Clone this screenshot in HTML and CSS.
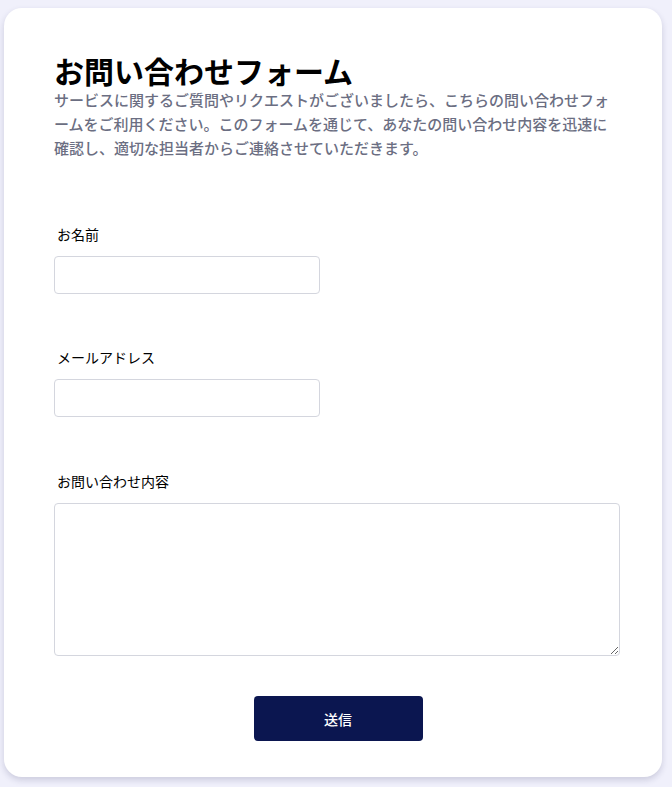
FILE: index.html
```html
<!DOCTYPE html>
<html lang="ja">
<head>
<meta charset="utf-8">
<link rel="stylesheet" href="styles.css">
</head>
<body>
<main class="card">
  <h1 class="title">お問い合わせフォーム</h1>
  <p class="desc">サービスに関するご質問やリクエストがございましたら、こちらの問い合わせフォームをご利用ください。このフォームを通じて、あなたの問い合わせ内容を迅速に確認し、適切な担当者からご連絡させていただきます。</p>
  <form class="form">
    <div class="field">
      <label class="label" for="name">お名前</label>
      <input class="input" id="name" type="text">
    </div>
    <div class="field field-mid">
      <label class="label" for="email">メールアドレス</label>
      <input class="input" id="email" type="email">
    </div>
    <div class="field field-last">
      <label class="label" for="msg">お問い合わせ内容</label>
      <textarea class="textarea" id="msg"></textarea>
    </div>
    <div class="actions">
      <button class="button" type="button">送信</button>
    </div>
  </form>
</main>
</body>
</html>
```
FILE: styles.css
```css
html, body {
  margin: 0;
  padding: 0;
}
body {
  background: #f0f0fb;
  font-family: "Noto Sans CJK JP", "Noto Sans", sans-serif;
  padding: 8px 10px 10px 4px;
}
.card {
  background: #ffffff;
  border-radius: 18px;
  box-shadow: 0 3px 6px rgba(40, 40, 90, 0.18);
  padding: 44px 42px 36px 50px;
  height: 689px;
}
.title {
  margin: 0;
  font-size: 30px;
  font-weight: 700;
  line-height: 36px;
  color: #000;
}
.desc {
  margin: 0;
  font-size: 15px;
  line-height: 24px;
  font-weight: 500;
  color: #6b6e82;
}
.form {
  margin-top: 63px;
  display: flex;
  flex-direction: column;
}
.field {
  display: flex;
  flex-direction: column;
  margin-bottom: 52px;
}
.field-mid {
  margin-bottom: 53px;
}
.field-last {
  margin-bottom: 40px;
}
.label {
  font-size: 14px;
  font-weight: 400;
  color: #000;
  line-height: 22px;
  padding-left: 3px;
  margin-bottom: 11px;
}
.input {
  box-sizing: border-box;
  width: 266px;
  height: 38px;
  border: 1px solid #d4d6de;
  border-radius: 4px;
  margin: 0;
  padding: 0 8px;
  font-family: inherit;
}
.textarea {
  box-sizing: border-box;
  width: 566px;
  height: 153px;
  border: 1px solid #d4d6de;
  border-radius: 4px;
  margin: 0;
  padding: 8px;
  font-family: inherit;
}
.actions {
  display: flex;
  justify-content: center;
  padding-left: 2px;
}
.button {
  width: 169px;
  height: 45px;
  background: #0b1650;
  color: #fff;
  border: none;
  border-radius: 4px;
  font-family: inherit;
  font-size: 14px;
  font-weight: 500;
}
```
